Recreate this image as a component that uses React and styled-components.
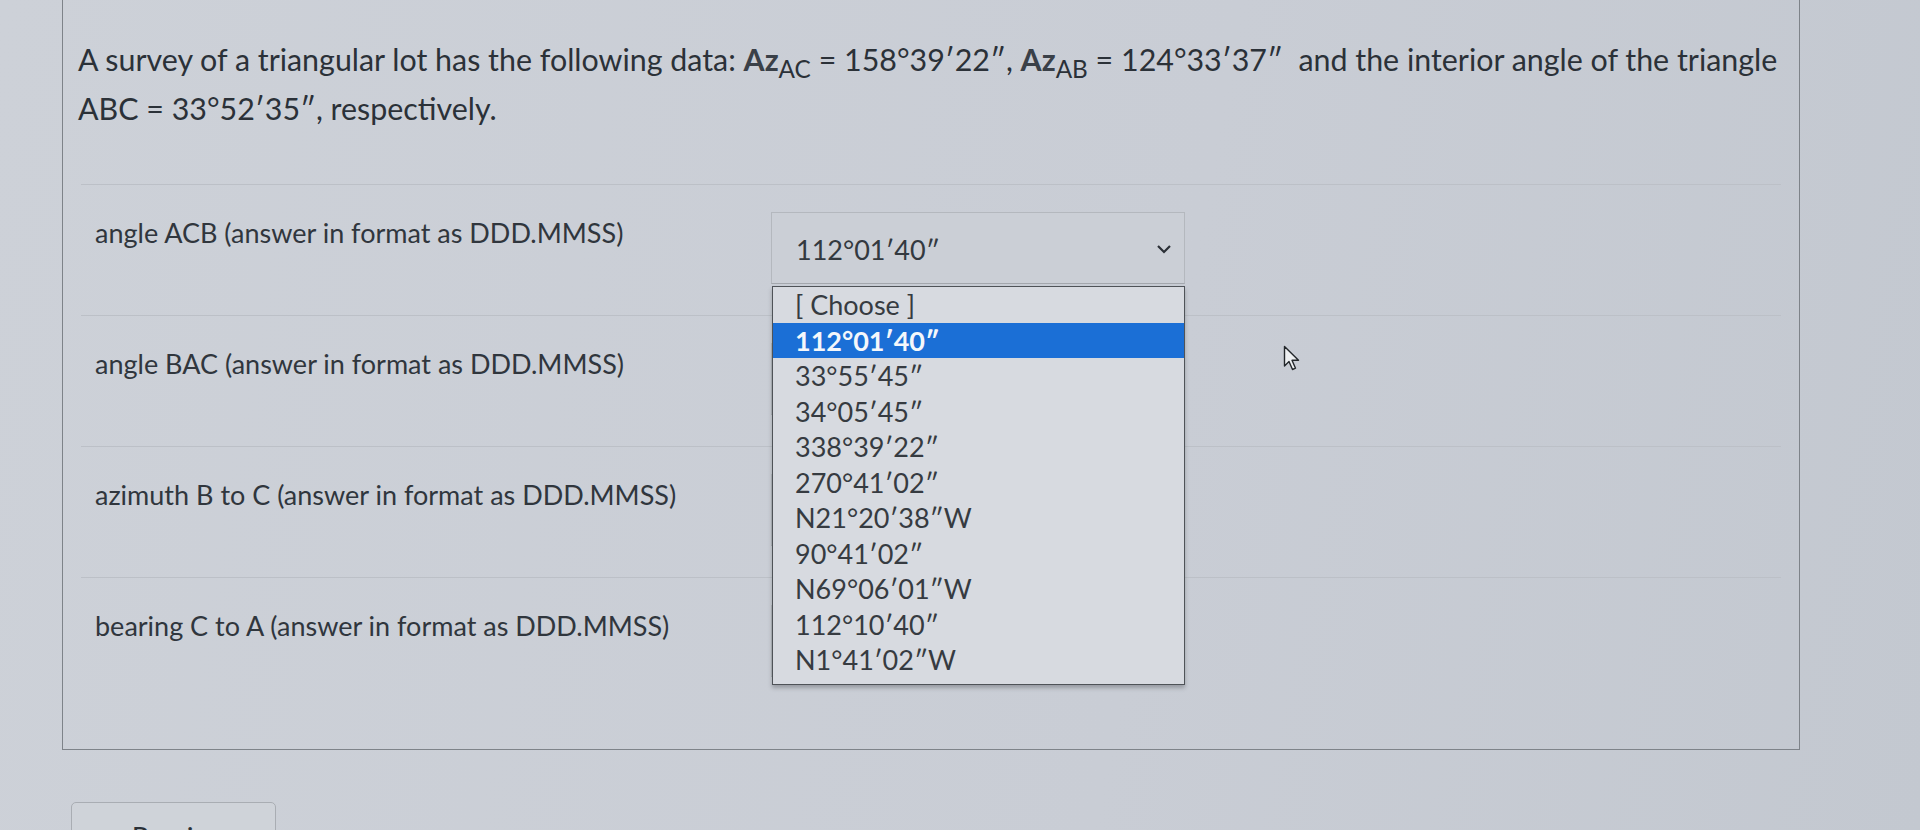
import React from 'react';
import styled, { createGlobalStyle } from 'styled-components';

const options = [
  '[ Choose ]',
  '112°01′40″',
  '33°55′45″',
  '34°05′45″',
  '338°39′22″',
  '270°41′02″',
  'N21°20′38″W',
  '90°41′02″',
  'N69°06′01″W',
  '112°10′40″',
  'N1°41′02″W',
];

const rows = [
  { label: 'angle ACB (answer in format as DDD.MMSS)', value: '112°01′40″', open: true },
  { label: 'angle BAC (answer in format as DDD.MMSS)', value: '[ Choose ]' },
  { label: 'azimuth B to C (answer in format as DDD.MMSS)', value: '[ Choose ]' },
  { label: 'bearing C to A (answer in format as DDD.MMSS)', value: '[ Choose ]' },
];

function App() {
  return (
    <>
      <GlobalStyle />
      <Page>
        <Card>
          <Question>
            A survey of a triangular lot has the following data: <Az>Az</Az><Sub>AC</Sub> = 158°39′22″, <Az>Az</Az><Sub>AB</Sub> = 124°33′37″&nbsp; and the interior angle of the triangle
            <br />
            ABC = 33°52′35″, respectively.
          </Question>
          <Answers>
            {rows.map((row) => (
              <Row key={row.label}>
                <Label>{row.label}</Label>
                <SelectWrap>
                  <SelectBox>
                    <span>{row.value}</span>
                    <svg width="16" height="10" viewBox="0 0 16 10">
                      <path d="M2 2 L8 8 L14 2" fill="none" stroke="#2b3036" strokeWidth="2.2" />
                    </svg>
                  </SelectBox>
                  {row.open && (
                    <OptionList>
                      {options.map((opt) => (
                        <Option key={opt} $active={opt === row.value}>{opt}</Option>
                      ))}
                    </OptionList>
                  )}
                </SelectWrap>
              </Row>
            ))}
          </Answers>
        </Card>
        <Footer>
          <NavButton>Previous</NavButton>
        </Footer>
        <Cursor width="18" height="27" viewBox="0 0 18 27">
          <path d="M1.5 1.5 L1.5 21 L6 16.5 L9.5 24.5 L12.5 23.2 L9 15.3 L15.5 15.3 Z" fill="#eef0f2" stroke="#23272b" strokeWidth="1.4" strokeLinejoin="round" />
        </Cursor>
      </Page>
    </>
  );
}

export default App;

const GlobalStyle = createGlobalStyle`
  html, body {
    margin: 0;
    height: 830px;
    overflow: hidden;
  }
  body {
    background: linear-gradient(100deg, #cdd1d8 0%, #c9cdd5 60%, #c3c8d0 100%);
    font-family: Lato, "Open Sans", sans-serif;
    color: #2b3138;
  }
`;

const Page = styled.div`
  position: relative;
  padding-left: 62px;
  width: 1738px;
`;

const Card = styled.div`
  border: 1px solid #7e8389;
  border-top: none;
  padding: 35px 18px 41px 15px;
`;

const Question = styled.p`
  margin: 0;
  font-size: 30.4px;
  line-height: 49px;
  white-space: nowrap;
`;

const Az = styled.span`
  font-weight: 700;
  color: #3a4048;
`;

const Sub = styled.sub`
  font-size: 0.8em;
  vertical-align: -0.28em;
  line-height: 0;
`;

const Answers = styled.div`
  margin: 51px 0 0 3px;
`;

const Row = styled.div`
  display: grid;
  grid-template-columns: 676px 414px;
  align-items: start;
  height: 130px;
  padding-left: 14px;
  border-top: 1px solid #bcc0c7;
`;

const Label = styled.div`
  padding-top: 30px;
  font-size: 27px;
  line-height: 36px;
  color: #30363d;
`;

const SelectWrap = styled.div`
  position: relative;
  margin-top: 27px;
`;

const SelectBox = styled.div`
  display: flex;
  align-items: center;
  justify-content: space-between;
  height: 72px;
  box-sizing: border-box;
  padding: 2px 12px 0 24px;
  border: 1px solid #b4b8be;
  border-bottom-color: #a3a7ad;
  background: #cbcfd6;
  font-size: 27px;
  color: #33393f;
`;

const OptionList = styled.ul`
  position: absolute;
  z-index: 5;
  top: calc(100% + 2px);
  left: 1px;
  right: 0;
  margin: 0;
  padding: 0 0 6px;
  list-style: none;
  background: #d7dae0;
  border: 1.5px solid #4f5358;
  box-shadow: 0 3px 4px rgba(60, 64, 70, 0.35);
`;

const Option = styled.li`
  height: 35.5px;
  line-height: 35.5px;
  padding-left: 22px;
  font-size: 27px;
  color: ${(p) => (p.$active ? '#f4f7fb' : '#363b41')};
  font-weight: ${(p) => (p.$active ? 700 : 400)};
  background: ${(p) => (p.$active ? '#1b6fd6' : 'transparent')};
`;

const Footer = styled.div`
  padding: 52px 0 0 9px;
`;

const NavButton = styled.button`
  width: 205px;
  height: 60px;
  border: 1px solid #a9adb3;
  border-radius: 5px;
  background: #cfd3d9;
  font-family: Lato, sans-serif;
  font-size: 28px;
  color: #2b3138;
  padding: 9px 0 0 22px;
`;

const Cursor = styled.svg`
  position: absolute;
  left: 1283px;
  top: 345px;
`;
